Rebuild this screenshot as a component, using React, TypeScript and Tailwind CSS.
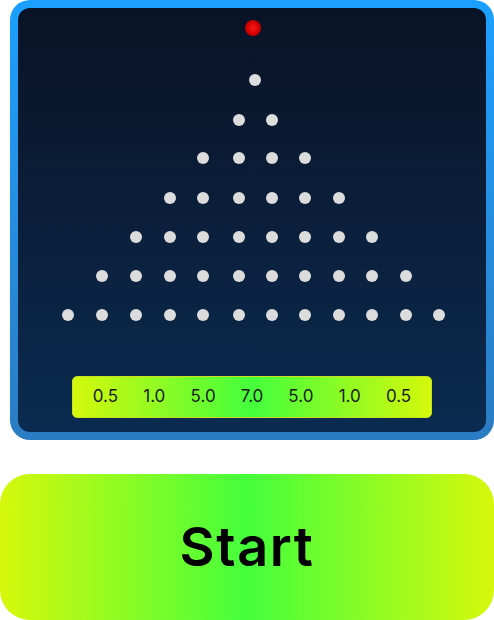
import React from "react";

const rows: number[][] = [
  [255],
  [239, 272],
  [203, 239, 272, 305],
  [170, 203, 239, 272, 305, 339],
  [136, 170, 203, 239, 272, 305, 339, 372],
  [102, 136, 170, 203, 239, 272, 305, 339, 372, 406],
  [68, 102, 136, 170, 203, 239, 272, 305, 339, 372, 406, 439],
];
const rowY = [80, 120, 158, 198, 237, 276, 315];
const mults = ["0.5", "1.0", "5.0", "7.0", "5.0", "1.0", "0.5"];

export default function App() {
  return (
    <div className="w-[494px] h-[620px] bg-white flex flex-col" style={{ fontFamily: "Inter, 'Noto Sans', sans-serif" }}>
      <div className="ml-[10px] w-[484px] h-[440px] rounded-[20px] p-[8px] bg-gradient-to-b from-[#1ba0ff] to-[#2a7cc2]">
        <div className="relative w-full h-full rounded-[12px] bg-gradient-to-b from-[#091326] to-[#0a2b50] flex flex-col justify-end items-center pb-[14px]">
          <div
            className="absolute w-[16px] h-[16px] rounded-full"
            style={{ left: 245 - 18, top: 20 - 8, background: "radial-gradient(circle at 50% 50%, #ff1a1a 0%, #d00000 55%, #8a0000 100%)" }}
          />
          {rows.map((r, i) =>
            r.map((x, j) => (
              <div
                key={`${i}-${j}`}
                className="absolute w-[12px] h-[12px] rounded-full bg-[#dcdcdc]"
                style={{ left: x - 6 - 18, top: rowY[i] - 6 - 8 }}
              />
            ))
          )}
          <div className="w-[360px] h-[42px] rounded-[5px] px-[8px] grid grid-cols-7 items-center border border-[#c8e020] bg-[linear-gradient(90deg,#d4f80c_0%,#44ff3c_50%,#d4f80c_100%)]">
            {mults.map((m, i) => (
              <div key={i} className="text-center text-[17px] text-[#1a1a1a]">
                {m}
              </div>
            ))}
          </div>
        </div>
      </div>
      <div className="mt-[34px] w-[494px] h-[146px] rounded-[30px] flex items-center justify-center bg-[linear-gradient(90deg,#d6f80c_0%,#44ff3c_50%,#d6f80c_100%)]">
        <span className="text-[54px] font-semibold tracking-[0.03em] text-black leading-none">Start</span>
      </div>
    </div>
  );
}
